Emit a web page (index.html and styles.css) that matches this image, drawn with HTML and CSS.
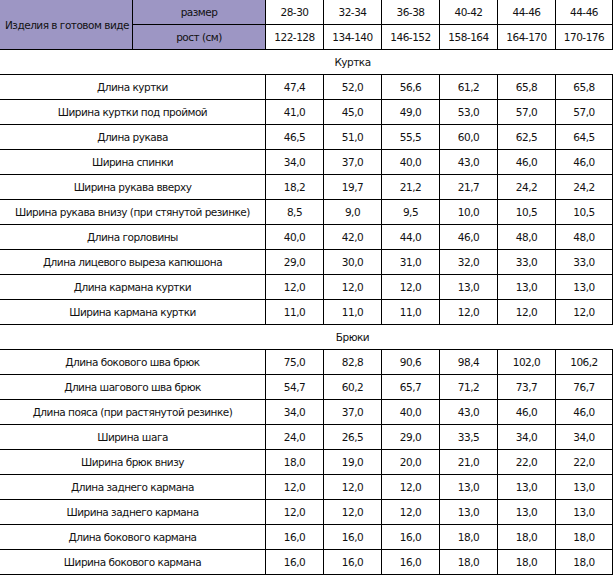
FILE: index.html
```html
<!DOCTYPE html>
<html lang="ru">
<head>
<meta charset="utf-8">
<title>Размеры</title>
<link rel="stylesheet" href="styles.css">
</head>
<body>
<table class="sizes">
  <colgroup>
    <col class="c-name"><col class="c-sub">
    <col class="c-num"><col class="c-num"><col class="c-num"><col class="c-num"><col class="c-num"><col class="c-last">
  </colgroup>
  <tr class="head">
    <td class="h-title" rowspan="2">Изделия в готовом виде</td>
    <td class="h-sub">размер</td>
    <td>28-30</td><td>32-34</td><td>36-38</td><td>40-42</td><td>44-46</td><td>44-46</td>
  </tr>
  <tr class="head">
    <td class="h-sub">рост (см)</td>
    <td>122-128</td><td>134-140</td><td>146-152</td><td>158-164</td><td>164-170</td><td>170-176</td>
  </tr>
  <tr class="section">
    <td></td><td></td><td></td><td>Куртка</td><td></td><td></td><td></td><td></td>
  </tr>
  <tr><td colspan="2">Длина куртки</td><td>47,4</td><td>52,0</td><td>56,6</td><td>61,2</td><td>65,8</td><td>65,8</td></tr>
  <tr><td colspan="2">Ширина куртки под проймой</td><td>41,0</td><td>45,0</td><td>49,0</td><td>53,0</td><td>57,0</td><td>57,0</td></tr>
  <tr><td colspan="2">Длина рукава</td><td>46,5</td><td>51,0</td><td>55,5</td><td>60,0</td><td>62,5</td><td>64,5</td></tr>
  <tr><td colspan="2">Ширина спинки</td><td>34,0</td><td>37,0</td><td>40,0</td><td>43,0</td><td>46,0</td><td>46,0</td></tr>
  <tr><td colspan="2">Ширина рукава вверху</td><td>18,2</td><td>19,7</td><td>21,2</td><td>21,7</td><td>24,2</td><td>24,2</td></tr>
  <tr><td colspan="2">Ширина рукава внизу (при стянутой резинке)</td><td>8,5</td><td>9,0</td><td>9,5</td><td>10,0</td><td>10,5</td><td>10,5</td></tr>
  <tr><td colspan="2">Длина горловины</td><td>40,0</td><td>42,0</td><td>44,0</td><td>46,0</td><td>48,0</td><td>48,0</td></tr>
  <tr><td colspan="2">Длина лицевого выреза капюшона</td><td>29,0</td><td>30,0</td><td>31,0</td><td>32,0</td><td>33,0</td><td>33,0</td></tr>
  <tr><td colspan="2">Длина кармана куртки</td><td>12,0</td><td>12,0</td><td>12,0</td><td>13,0</td><td>13,0</td><td>13,0</td></tr>
  <tr><td colspan="2">Ширина кармана куртки</td><td>11,0</td><td>11,0</td><td>11,0</td><td>12,0</td><td>12,0</td><td>12,0</td></tr>
  <tr class="section">
    <td></td><td></td><td></td><td>Брюки</td><td></td><td></td><td></td><td></td>
  </tr>
  <tr><td colspan="2">Длина бокового шва брюк</td><td>75,0</td><td>82,8</td><td>90,6</td><td>98,4</td><td>102,0</td><td>106,2</td></tr>
  <tr><td colspan="2">Длина шагового шва брюк</td><td>54,7</td><td>60,2</td><td>65,7</td><td>71,2</td><td>73,7</td><td>76,7</td></tr>
  <tr><td colspan="2">Длина пояса (при растянутой резинке)</td><td>34,0</td><td>37,0</td><td>40,0</td><td>43,0</td><td>46,0</td><td>46,0</td></tr>
  <tr><td colspan="2">Ширина шага</td><td>24,0</td><td>26,5</td><td>29,0</td><td>33,5</td><td>34,0</td><td>34,0</td></tr>
  <tr><td colspan="2">Ширина брюк внизу</td><td>18,0</td><td>19,0</td><td>20,0</td><td>21,0</td><td>22,0</td><td>22,0</td></tr>
  <tr><td colspan="2">Длина заднего кармана</td><td>12,0</td><td>12,0</td><td>12,0</td><td>13,0</td><td>13,0</td><td>13,0</td></tr>
  <tr><td colspan="2">Ширина заднего кармана</td><td>12,0</td><td>12,0</td><td>12,0</td><td>13,0</td><td>13,0</td><td>13,0</td></tr>
  <tr><td colspan="2">Длина бокового кармана</td><td>16,0</td><td>16,0</td><td>16,0</td><td>18,0</td><td>18,0</td><td>18,0</td></tr>
  <tr><td colspan="2">Ширина бокового кармана</td><td>16,0</td><td>16,0</td><td>16,0</td><td>18,0</td><td>18,0</td><td>18,0</td></tr>
</table>
</body>
</html>
```
FILE: styles.css
```css
html, body {
  margin: 0;
  padding: 0;
  background: #fff;
}
body {
  overflow: hidden;
}
.sizes {
  margin: -1px 0 0 -1px;
  width: 613px;
  border-collapse: collapse;
  table-layout: fixed;
  font-family: "DejaVu Sans", Verdana, sans-serif;
  font-size: 10.5px;
  letter-spacing: -0.5px;
  color: #111;
}
.c-name { width: 133px; }
.c-sub { width: 133px; }
.c-num { width: 58px; }
.c-last { width: 57px; }
.sizes td {
  height: 24px;
  padding: 0 2px;
  border: 1px solid #000;
  text-align: center;
  vertical-align: middle;
  white-space: nowrap;
  overflow: hidden;
}
.head .h-title,
.head .h-sub {
  background: #9d96c4;
}
.head .h-title {
  text-align: left;
  padding-left: 5px;
}
.section td {
  border-left: none;
  border-right: none;
}
```
